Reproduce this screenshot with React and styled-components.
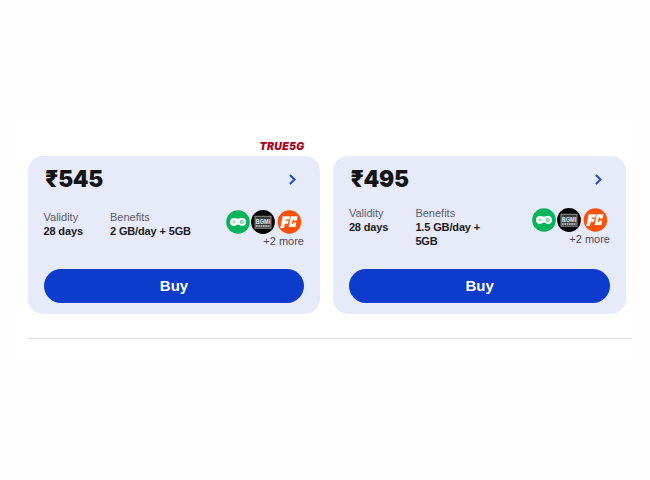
import styled, { createGlobalStyle } from "styled-components";

const GlobalStyle = createGlobalStyle`
  * {
    box-sizing: border-box;
  }
  body {
    margin: 0;
    background-color: #fdfdfd;
    font-family: "Liberation Sans", Arial, sans-serif;
  }
`;

const Page = styled.main`
  height: 480px;
  padding: 120px 18px 120px 16px;
  overflow: hidden;
`;

const Panel = styled.section`
  height: 240px;
  padding: 18px 0 0 12px;
  background-color: #ffffff;
`;

const PlanList = styled.div`
  display: grid;
  grid-template-columns: 292px 292.6px;
  column-gap: 13.4px;
`;

const PlanTag = styled.div`
  height: 18px;
  padding: 1px 15.5px 0 0;
  color: #a90022;
  font-family: Inter, sans-serif;
  font-size: 10.5px;
  font-weight: 900;
  font-style: italic;
  line-height: 15px;
  letter-spacing: 0.3px;
  text-align: right;
`;

const Card = styled.article`
  display: flex;
  flex-direction: column;
  height: 158px;
  padding: 8px 16px 11px;
  border-radius: 15px;
  background-color: #e7eaf9;
`;

const CardHeader = styled.header`
  display: flex;
  align-items: center;
  justify-content: space-between;
  height: 30px;
  padding: 0 7px 0 1px;
`;

const Price = styled.h2`
  margin: 0;
  color: #141414;
  font-family: Inter, sans-serif;
  font-size: 22.5px;
  font-weight: 900;
  line-height: 30px;
  letter-spacing: -0.3px;
`;

const Details = styled.div`
  display: grid;
  grid-template-columns: 66.5px 1fr 78px;
  align-items: start;
  height: 75px;
  margin-left: -0.5px;
`;

const Detail = styled.div`
  padding-top: ${(props) => props.$top}px;
  font-size: 11px;
  line-height: 14px;
`;

const Label = styled.div`
  color: #5c5d64;
`;

const Value = styled.div`
  width: ${(props) => (props.$wrap ? "72px" : "auto")};
  color: #1b1c20;
  font-weight: 700;
  letter-spacing: -0.14px;
  white-space: ${(props) => (props.$wrap ? "normal" : "nowrap")};
`;

const Apps = styled.div`
  padding-top: ${(props) => props.$top}px;
`;

const AppIcons = styled.div`
  display: flex;
  gap: 1.5px;
  margin-left: -0.4px;

  svg {
    display: block;
    overflow: visible;
  }
`;

const MoreApps = styled.div`
  color: #4b4c53;
  font-size: 11px;
  line-height: 14px;
  text-align: right;
  white-space: nowrap;
`;

const BuyButton = styled.button`
  width: 100%;
  height: 34px;
  padding: 0;
  border: none;
  border-radius: 17px;
  background-color: #0d3bcb;
  color: #ffffff;
  font-family: "Liberation Sans", Arial, sans-serif;
  font-size: 15px;
  font-weight: 700;
  line-height: 34px;
  cursor: pointer;
`;

const Divider = styled.hr`
  height: 1px;
  margin: 24px 0 0;
  border: none;
  background-color: #dedede;
`;

const Chevron = () => (
  <svg width="9" height="12" viewBox="0 0 9 12" fill="none">
    <path d="M1.9 1.9L6.5 6.5L1.9 11.1" stroke="#274fce" strokeWidth="2.1" />
  </svg>
);

const GamesIcon = () => (
  <svg width="24" height="24" viewBox="0 0 24 24">
    <circle cx="12" cy="12" r="11.8" fill="#05b45b" />
    <path
      d="M8 8.1c1.8 0 2.5.7 4 .7s2.2-.7 4-.7a4 4 0 0 1 0 8c-1.8 0-2.6-1.6-4-1.6s-2.2 1.6-4 1.6a4 4 0 0 1 0-8z"
      fill="#fff"
    />
    <path d="M8 10.3v3.4M6.3 12h3.4" stroke="#79d5a5" strokeWidth="1" />
    <circle cx="15.8" cy="12" r="1.5" fill="none" stroke="#42c27e" />
  </svg>
);

const BgmiIcon = () => (
  <svg width="24" height="24" viewBox="0 0 24 24">
    <circle cx="12" cy="12" r="11.9" fill="#050505" />
    <rect x="4" y="6.2" width="16" height="12" fill="#3a3a3a" stroke="#aaa" strokeWidth="0.8" />
    <path d="M5 16h14" stroke="#aaa" strokeWidth="1.8" strokeDasharray="1.8 0.5" />
    <text
      x="12"
      y="13.9"
      fill="#f0f0f0"
      fontFamily="Liberation Sans, sans-serif"
      fontSize="8"
      fontWeight="700"
      textAnchor="middle"
      textLength="14.4"
      lengthAdjust="spacingAndGlyphs"
    >
      BGMI
    </text>
  </svg>
);

const FanCodeIcon = () => (
  <svg width="24" height="24" viewBox="0 0 24 24">
    <circle cx="12.4" cy="12" r="11.8" fill="#ff5108" />
    <path
      d="M5.7 6.2h7.3l-.7 3.2H8.8l-.3 1.3h3.1l-.7 3H7.8L6.9 18H3.3z"
      fill="#fff"
    />
    <path
      d="M13.8 6.2h6.8l-.9 4.4h-3l.2-1.2h-1.1l-1 4.5h1.4l.3-1.3h2.8l-.9 4.4h-6.8z"
      fill="#fff"
    />
  </svg>
);

const plans = [
  {
    price: "₹545",
    tag: "TRUE5G",
    validity: "28 days",
    benefits: "2 GB/day + 5GB",
    detailTop: 16,
    appsTop: 16,
  },
  {
    price: "₹495",
    validity: "28 days",
    benefits: "1.5 GB/day + 5GB",
    wrap: true,
    detailTop: 12,
    appsTop: 14,
  },
];

const Plan = ({ plan }) => (
  <div>
    <PlanTag>{plan.tag}</PlanTag>
    <Card>
      <CardHeader>
        <Price>{plan.price}</Price>
        <Chevron />
      </CardHeader>
      <Details>
        <Detail $top={plan.detailTop}>
          <Label>Validity</Label>
          <Value>{plan.validity}</Value>
        </Detail>
        <Detail $top={plan.detailTop}>
          <Label>Benefits</Label>
          <Value $wrap={plan.wrap}>{plan.benefits}</Value>
        </Detail>
        <Apps $top={plan.appsTop}>
          <AppIcons>
            <GamesIcon />
            <BgmiIcon />
            <FanCodeIcon />
          </AppIcons>
          <MoreApps>+2 more</MoreApps>
        </Apps>
      </Details>
      <BuyButton>Buy</BuyButton>
    </Card>
  </div>
);

export default function App() {
  return (
    <>
      <GlobalStyle />
      <Page>
        <Panel>
          <PlanList>
            {plans.map((plan) => (
              <Plan key={plan.price} plan={plan} />
            ))}
          </PlanList>
          <Divider />
        </Panel>
      </Page>
    </>
  );
}
